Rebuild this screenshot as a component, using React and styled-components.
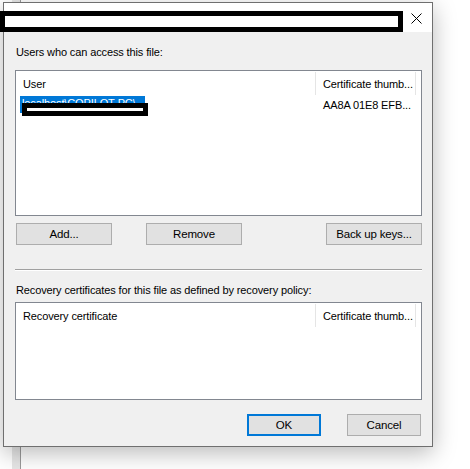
import React from 'react';
import styled, { createGlobalStyle } from 'styled-components';

const GlobalStyle = createGlobalStyle`
  html, body {
    margin: 0;
    padding: 0;
    background: #ffffff;
  }
  body {
    font-family: "Liberation Sans", Arial, sans-serif;
    font-size: 11px;
    letter-spacing: -0.12px;
    color: #000;
  }
`;

const Desktop = styled.div`
  position: relative;
  width: 470px;
  height: 469px;
  overflow: hidden;
  background: #ffffff;
`;

// window sitting behind the dialog, only its edge shows below
const BackWindow = styled.div`
  position: absolute;
  left: 12px;
  top: 0;
  width: 8px;
  height: 469px;
  background: #e6e6e6;
  border-right: 1px solid #9a9a9a;
`;

const Window = styled.div`
  position: absolute;
  left: 3px;
  top: 2px;
  width: 428px;
  height: 443px;
  border: 1px solid #6f6f6f;
  background: #f0f0f0;
  display: flex;
  flex-direction: column;
  box-shadow: 0 6px 22px rgba(0, 0, 0, 0.28);
`;

const TitleBar = styled.div`
  height: 29px;
  background: #ffffff;
  display: flex;
  align-items: center;
  justify-content: flex-end;
  padding-right: 10px;
`;

const TitleRedaction = styled.div`
  position: absolute;
  left: -4px;
  top: 8px;
  width: 393px;
  height: 11px;
  border: 5px solid #000;
  background: #fff;
`;

const CloseIcon = styled.svg`
  width: 11px;
  height: 11px;
  margin-top: 1px;
`;

const Body = styled.div`
  flex: 1;
  display: flex;
  flex-direction: column;
  padding: 13px 10px 0 11px;
`;

const Label = styled.div`
  line-height: 15px;
  padding-left: 1px;
  margin-bottom: ${p => p.gap || 10}px;
`;

const ListBox = styled.div`
  height: ${p => p.h}px;
  border: 1px solid #828790;
  background: #ffffff;
  display: flex;
  flex-direction: column;
  box-sizing: border-box;
`;

const Row = styled.div`
  position: relative;
  display: grid;
  grid-template-columns: 300px 100px 1fr;
  height: ${p => p.h}px;
  align-items: center;
`;

const HeaderCell = styled.div`
  height: ${p => p.h || 23}px;
  align-self: start;
  margin-top: 1px;
  display: flex;
  align-items: center;
  padding-left: 7px;
  border-right: 1px solid #e5e5e5;
  white-space: nowrap;
  overflow: hidden;
`;

const Cell = styled.div`
  padding-left: ${p => p.pad || 7}px;
  white-space: nowrap;
  overflow: hidden;
`;

const Selected = styled.span`
  display: inline-block;
  background: #0078d7;
  color: #ffffff;
  width: 125px;
  height: 17px;
  line-height: 15px;
  overflow: hidden;
  margin-left: -2px;
  padding-left: 2px;
  box-sizing: border-box;
`;

const RowRedaction = styled.div`
  position: absolute;
  left: 6px;
  top: 7px;
  width: 116px;
  height: 3px;
  border: 5px solid #000;
  background: #fff;
`;

const ButtonRow = styled.div`
  display: flex;
  justify-content: ${p => p.end ? 'flex-end' : 'space-between'};
  gap: ${p => p.end ? '26px' : '0'};
  margin-top: ${p => p.top}px;
  padding-left: ${p => p.end ? 0 : 1}px;
  padding-right: ${p => p.end ? 1 : 0}px;
`;

const Spacer = styled.div`
  flex: 1;
`;

const Button = styled.button`
  width: ${p => p.w || 96}px;
  height: 22px;
  box-sizing: border-box;
  background: #e1e1e1;
  border: ${p => p.primary ? '2px solid #0078d7' : '1px solid #adadad'};
  font-family: inherit;
  font-size: 11.5px;
  letter-spacing: -0.15px;
  color: #000;
  padding: 0;
  margin-left: ${p => p.ml || 0}px;
`;

const Separator = styled.div`
  height: 1px;
  background: #a0a0a0;
  margin: 24px 0 12px;
  border-bottom: 1px solid #ffffff;
`;

export default function App() {
  return (
    <>
      <GlobalStyle />
      <Desktop>
        <BackWindow />
        <Window>
          <TitleBar>
            <TitleRedaction />
            <CloseIcon viewBox="0 0 11 11">
              <path d="M0.5 0.5 L10.5 10.5 M10.5 0.5 L0.5 10.5" stroke="#000" strokeWidth="1" fill="none" />
            </CloseIcon>
          </TitleBar>
          <Body>
            <Label gap={10}>Users who can access this file:</Label>
            <ListBox h={146}>
              <Row h={25}>
                <HeaderCell>User</HeaderCell>
                <HeaderCell>Certificate thumb...</HeaderCell>
              </Row>
              <Row h={18}>
                <Cell pad={6}>
                  <Selected>localhost\COPILOT-PC\</Selected>
                </Cell>
                <Cell>AA8A 01E8 EFB...</Cell>
                <RowRedaction />
              </Row>
            </ListBox>
            <ButtonRow top={7}>
              <Button>Add...</Button>
              <Button ml={34}>Remove</Button>
              <Spacer />
              <Button>Back up keys...</Button>
            </ButtonRow>
            <Separator />
            <Label gap={4}>Recovery certificates for this file as defined by recovery policy:</Label>
            <ListBox h={98}>
              <Row h={25}>
                <HeaderCell>Recovery certificate</HeaderCell>
                <HeaderCell>Certificate thumb...</HeaderCell>
              </Row>
            </ListBox>
            <ButtonRow end top={14}>
              <Button primary w={74}>OK</Button>
              <Button w={74}>Cancel</Button>
            </ButtonRow>
          </Body>
        </Window>
      </Desktop>
    </>
  );
}
